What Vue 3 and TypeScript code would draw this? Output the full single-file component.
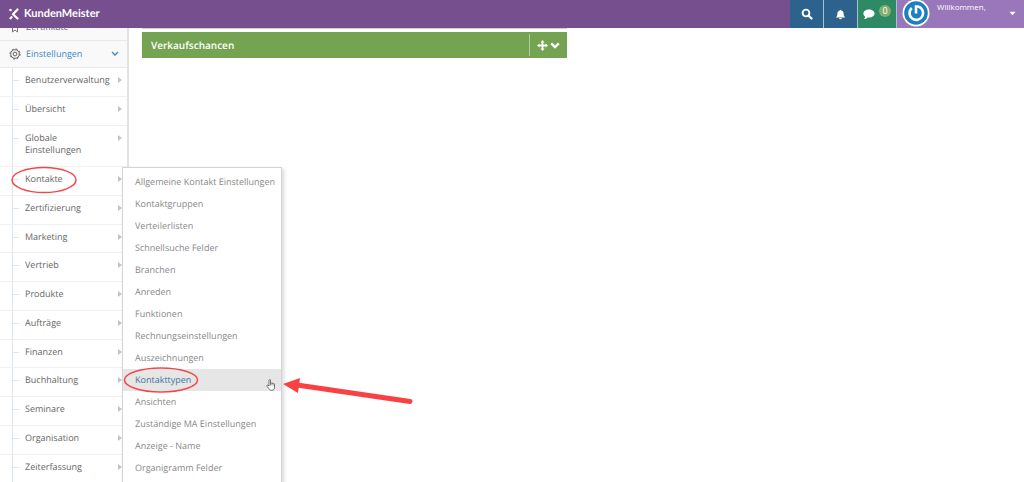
<script setup lang="ts">
interface Entry { label: string; marked?: boolean }

const sections: Entry[] = [
  { label: 'Benutzerverwaltung' },
  { label: 'Übersicht' },
  { label: 'Globale Einstellungen' },
  { label: 'Kontakte', marked: true },
  { label: 'Zertifizierung' },
  { label: 'Marketing' },
  { label: 'Vertrieb' },
  { label: 'Produkte' },
  { label: 'Aufträge' },
  { label: 'Finanzen' },
  { label: 'Buchhaltung' },
  { label: 'Seminare' },
  { label: 'Organisation' },
  { label: 'Zeiterfassung' },
]

const contactEntries: Entry[] = [
  { label: 'Allgemeine Kontakt Einstellungen' },
  { label: 'Kontaktgruppen' },
  { label: 'Verteilerlisten' },
  { label: 'Schnellsuche Felder' },
  { label: 'Branchen' },
  { label: 'Anreden' },
  { label: 'Funktionen' },
  { label: 'Rechnungseinstellungen' },
  { label: 'Auszeichnungen' },
  { label: 'Kontakttypen', marked: true },
  { label: 'Ansichten' },
  { label: 'Zuständige MA Einstellungen' },
  { label: 'Anzeige - Name' },
  { label: 'Organigramm Felder' },
]
</script>

<template>
  <div class="app">
    <header class="topbar">
      <a class="brand" href="#">
        <svg class="brand-mark" viewBox="0 0 20 24" aria-hidden="true">
          <g fill="none" stroke="#fff" stroke-width="4.500" stroke-linecap="round" stroke-linejoin="round">
            <path d="M17 3 8 12.500 17 21" />
            <path d="m3 20.500 2-2" />
          </g>
          <circle cx="3" cy="4" r="2.600" fill="#fff" />
        </svg>
        <span>KundenMeister</span>
      </a>
      <nav class="tools">
        <button class="tool blue" type="button" aria-label="Suche">
          <svg viewBox="0 0 12 12" width="12" height="12"><circle cx="5" cy="5" r="3.400" fill="none" stroke="#fff" stroke-width="1.900" /><path d="m7.700 7.700 2.800 2.800" stroke="#fff" stroke-width="2.200" stroke-linecap="round" /></svg>
        </button>
        <button class="tool blue" type="button" aria-label="Benachrichtigungen">
          <svg viewBox="0 0 12 12" width="11" height="11"><path d="M6 .8c.5 0 .8.3.8.800C8.700 2 9.400 3.500 9.400 5c0 2.300.6 3.400 1.800 4.300H.8C2 8.400 2.600 7.300 2.600 5c0-1.500.7-3 2.600-3.400 0-.5.3-.8.800-.8zM4.500 9.800h3c0 .9-.6 1.500-1.500 1.500s-1.500-.6-1.500-1.500z" fill="#fff" /></svg>
        </button>
        <button class="tool green" type="button" aria-label="Nachrichten">
          <svg viewBox="0 0 12 12" width="12" height="12"><path d="M6 1.500c3.200 0 5.600 1.800 5.600 4S9.200 9.500 6 9.500l-1.300-.1C3.600 10.400 2.400 10.900 1 11c.7-.7 1.100-1.400 1.200-2.300C1 8 .4 6.800.4 5.500c0-2.200 2.400-4 5.600-4z" fill="#fff" /></svg>
          <span class="count">0</span>
        </button>
        <button class="user" type="button">
          <svg class="avatar" viewBox="0 0 28 28" aria-hidden="true">
            <circle cx="14" cy="14" r="13.500" fill="#fff" />
            <circle cx="14" cy="14" r="11.800" fill="#1c7fc0" />
            <path d="M9.800 9A6.800 6.800 0 1 0 16 7.500h-2V14.500" fill="none" stroke="#fff" stroke-width="2.600" />
          </svg>
          <span class="welcome">Willkommen,</span>
          <svg class="caret" viewBox="0 0 8 5" aria-hidden="true"><path d="M.5.500h7L4 4.500z" fill="#fff" /></svg>
        </button>
      </nav>
    </header>

    <div class="body">
      <aside class="sidebar">
        <a class="main-item" href="#">
          <svg class="main-icon" viewBox="0 0 12 12" aria-hidden="true"><path d="M2 1h8v4H8.500v6L6 9l-2.500 2V5H2z" fill="none" stroke="#777" /></svg>
          <span>Zertifikate</span>
        </a>
        <a class="main-item open" href="#">
          <svg class="main-icon" viewBox="0 0 12 12" aria-hidden="true"><g fill="none" stroke="#666"><circle cx="6" cy="6" r="4.300" /><circle cx="6" cy="6" r="5.100" stroke-width="1" stroke-dasharray="2 2" /><circle cx="6" cy="6" r="1.900" /></g></svg>
          <span>Einstellungen</span>
          <svg class="chevron" viewBox="0 0 8 6" aria-hidden="true"><path d="m1 1 3 3 3-3" fill="none" stroke="#3a87c8" stroke-width="1.300" /></svg>
        </a>
        <ul class="sections">
          <li v-for="s in sections" :key="s.label">
            <a class="section" href="#">
              <span class="section-label">{{ s.label }}</span>
              <svg class="arrow" viewBox="0 0 4 6" aria-hidden="true"><path d="M0 0l4 3-4 3z" fill="#c4c4c4" /></svg>
            </a>
            <svg v-if="s.marked" class="ring" viewBox="0 0 68 28" aria-hidden="true"><ellipse cx="34" cy="14" rx="32" ry="12.500" /></svg>
            <ul v-if="s.marked" class="flyout">
              <li v-for="c in contactEntries" :key="c.label" :class="{ current: c.marked }">
                <a href="#">{{ c.label }}</a>
                <template v-if="c.marked">
                  <svg class="ring type-ring" viewBox="0 0 76 28" aria-hidden="true"><ellipse cx="38" cy="14" rx="36.500" ry="12" /></svg>
                  <svg class="hand" viewBox="0 0 20 26" aria-hidden="true"><path d="M6 15V3.500c0-2 3-2 3 0V10c0-1.500 2.800-1.500 2.800.3 0-1.300 2.700-1.200 2.700.5 0-1.200 2.500-1 2.500.7V17c0 4-2 6.500-6 6.500-3 0-4.300-1.500-5.500-3.500L2 15.500c-1-1.800 1-3 2.300-1.700z" fill="#fff" stroke="#444" stroke-width="1.500" stroke-linejoin="round" /><path d="M9 10v4M11.800 11v3M14.500 11.500V14" stroke="#444" stroke-width="1.200" /></svg>
                  <svg class="pointer" viewBox="0 0 130 32" aria-hidden="true"><path d="M14 7 127 23.500" stroke="#f94144" stroke-width="5" stroke-linecap="round" /><path d="M0 6 17 0 15 15z" fill="#f94144" /></svg>
                </template>
              </li>
            </ul>
          </li>
        </ul>
      </aside>

      <main class="content">
        <section class="panel">
          <h2>Verkaufschancen</h2>
          <div class="panel-tools">
            <button type="button" aria-label="Verschieben"><svg viewBox="0 0 12 12" width="11" height="11"><path d="M6 0l2.200 2.600H7V5h2.400V3.800L12 6 9.400 8.200V7H7v2.400h1.200L6 12 3.800 9.400H5V7H2.600v1.200L0 6l2.600-2.200V5H5V2.600H3.800z" fill="#fff" /></svg></button>
            <button type="button" aria-label="Einklappen"><svg viewBox="0 0 10 7" width="10" height="7"><path d="m1.200 1.300 3.800 3.800 3.800-3.800" fill="none" stroke="#fff" stroke-width="2.400" /></svg></button>
          </div>
        </section>
      </main>
    </div>
  </div>
</template>

<style>
html,
body {
  overflow: hidden;
}
</style>

<style scoped>
.app {
  height: 100vh;
  display: flex;
  flex-direction: column;
  background: #fff;
  font-family: 'Open Sans', 'Noto Sans', sans-serif;
  font-size: 9px;
  line-height: 1.42;
  text-rendering: geometricPrecision;
  color: #666;
}
a {
  color: inherit;
  text-decoration: none;
}
button {
  padding: 0;
  border: 0;
  background: none;
  font: inherit;
  color: #fff;
}
ul {
  margin: 0;
  padding: 0;
  list-style: none;
}
svg {
  display: block;
  flex: none;
}
.topbar {
  position: relative;
  z-index: 3;
  flex: none;
  display: flex;
  justify-content: space-between;
  height: 28px;
  background: #764f8e;
}
.brand {
  display: flex;
  align-items: center;
  gap: 5px;
  padding-left: 9px;
  font-family: Lato, 'Open Sans', sans-serif;
  font-size: 11px;
  font-weight: 700;
  color: #fff;
}
.brand-mark {
  width: 10px;
  height: 12px;
}
.tools {
  display: flex;
}
.tool {
  display: flex;
  align-items: center;
  justify-content: center;
  gap: 4px;
  width: 34px;
  border-right: 1px solid #a9bfd2;
}
.blue {
  background: #2c628c;
}
.green {
  width: 39px;
  background: #2e8965;
}
.count {
  width: 12px;
  margin-top: -6px;
  border-radius: 6px;
  background: #82af6f;
  font-size: 9px;
  line-height: 12px;
}
.user {
  display: flex;
  align-items: flex-start;
  width: 127px;
  padding: 0 8px 0 5px;
  background: #9a76bb;
}
.avatar {
  width: 28px;
  height: 28px;
  margin-top: -1px;
}
.welcome {
  margin-left: 7px;
  font-size: 8px;
  line-height: 14px;
}
.caret {
  width: 7px;
  height: 5px;
  margin: 11px 0 0 auto;
}
.body {
  flex: 1;
  min-height: 0;
  display: flex;
}
.sidebar {
  width: 127px;
  margin-top: -14px;
  border-right: 2px solid #e2e2e2;
  background: #fff;
}
.main-item {
  display: flex;
  align-items: center;
  height: 26px;
  padding: 0 8px 0 9px;
  border-bottom: 1px solid #e8e8e8;
  background: #f9f9f9;
}
.main-icon {
  width: 12px;
  height: 12px;
  margin-right: 5px;
}
.open {
  color: #3a87c8;
}
.chevron {
  width: 8px;
  height: 6px;
  margin-left: auto;
}
.sections > li {
  position: relative;
}
.section {
  position: relative;
  display: flex;
  align-items: flex-start;
  justify-content: space-between;
  padding: 6px 5px 9px 25px;
  border-bottom: 1px solid #f0f0f0;
}
.section::before {
  content: '';
  position: absolute;
  inset: 0 auto 0 12px;
  width: 6px;
  border-left: 1px solid #dbe6ee;
  background: linear-gradient(#dbe6ee, #dbe6ee) 0 12px / 6px 1px no-repeat;
}
.section-label {
  max-width: 84px;
}
.arrow {
  width: 4px;
  height: 6px;
  margin-top: 3px;
}
.ring {
  position: absolute;
  top: -1px;
  left: 10px;
  width: 68px;
  height: 28px;
  fill: none;
  stroke: #f2484b;
  stroke-width: 1.5px;
}
.flyout {
  position: absolute;
  z-index: 2;
  top: 0;
  left: 122px;
  width: 160px;
  padding: 3px 0;
  box-sizing: border-box;
  border: 1px solid #d4d4d4;
  background: #fff;
  box-shadow: 2px 2px 4px rgba(0, 0, 0, 0.15);
  color: #888;
}
.flyout li {
  position: relative;
}
.flyout a {
  display: block;
  padding-left: 12px;
  line-height: 22px;
}
.current {
  background: #e6e6e6;
  color: #4473a0;
}
.type-ring {
  top: -3px;
  left: 0;
  width: 76px;
}
.hand {
  position: absolute;
  top: 9px;
  left: 143px;
  width: 10px;
  height: 14px;
}
.pointer {
  position: absolute;
  top: 9px;
  left: 160px;
  width: 130px;
  height: 32px;
}
.content {
  flex: 1;
  padding-left: 13px;
}
.content::before {
  content: '';
  display: block;
  width: 425px;
  height: 1px;
  background: #c9d6bd;
}
.panel {
  display: flex;
  align-items: center;
  justify-content: space-between;
  width: 425px;
  height: 26px;
  margin-top: 3px;
  background: #74a352;
  color: #fff;
}
.panel h2 {
  margin: 0 0 0 9px;
  font-size: 10px;
  font-weight: 600;
}
.panel-tools {
  display: flex;
  align-items: center;
  gap: 2px;
  padding: 0 7px;
  height: 22px;
  border-left: 1px solid #b0cc9c;
}
</style>
